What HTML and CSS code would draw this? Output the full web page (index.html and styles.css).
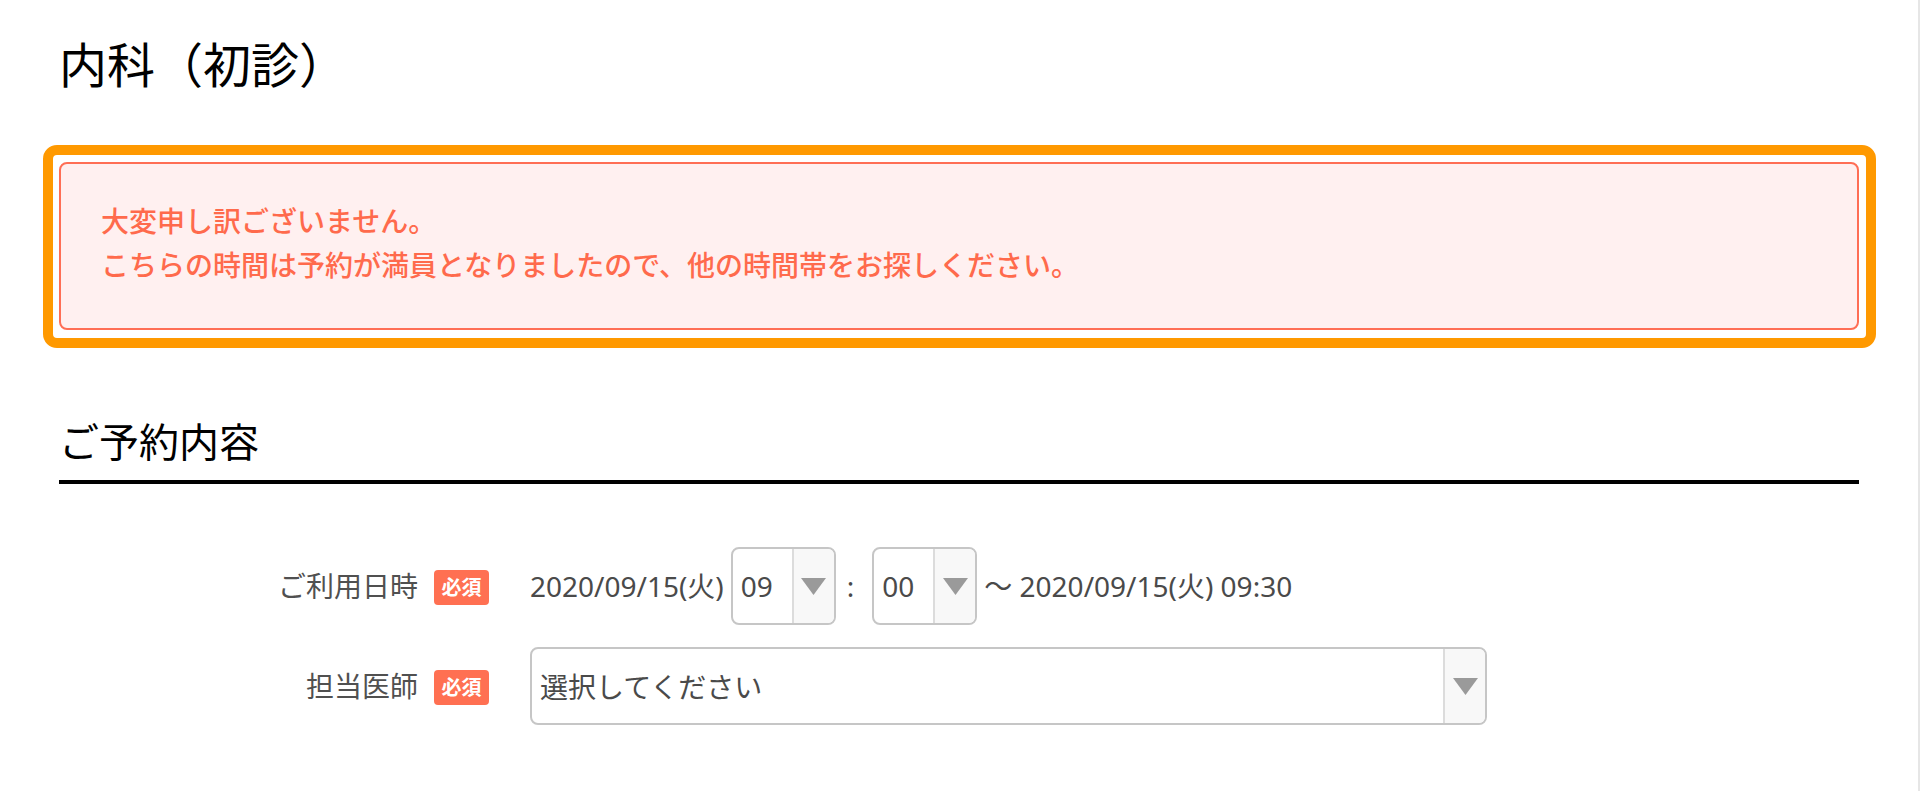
FILE: index.html
```html
<!DOCTYPE html>
<html lang="ja">
<head>
<meta charset="utf-8">
<title>内科（初診）</title>
<link rel="stylesheet" href="styles.css">
</head>
<body>
<div class="page">
  <main class="content">
    <h1 class="title">内科（初診）</h1>

    <div class="highlight">
      <div class="alert">
        <p class="alert-text">大変申し訳ございません。<br>こちらの時間は予約が満員となりましたので、他の時間帯をお探しください。</p>
      </div>
    </div>

    <section class="section">
      <h2 class="section-title">ご予約内容</h2>

      <div class="form">
        <div class="form-row">
          <div class="form-label">
            <span class="label-text">ご利用日時</span>
            <span class="badge">必須</span>
          </div>
          <div class="form-value">
            <span class="value-text date">2020/09/15(火)</span>
            <div class="select select-time">
              <span class="select-value">09</span>
              <span class="select-arrow"><svg width="25" height="17" viewBox="0 0 25 17"><polygon points="0,0 25,0 12.5,17" fill="#9a9a9a"/></svg></span>
            </div>
            <span class="value-text colon">:</span>
            <div class="select select-time">
              <span class="select-value">00</span>
              <span class="select-arrow"><svg width="25" height="17" viewBox="0 0 25 17"><polygon points="0,0 25,0 12.5,17" fill="#9a9a9a"/></svg></span>
            </div>
            <span class="value-text until">〜 2020/09/15(火) 09:30</span>
          </div>
        </div>

        <div class="form-row">
          <div class="form-label">
            <span class="label-text">担当医師</span>
            <span class="badge">必須</span>
          </div>
          <div class="form-value">
            <div class="select select-wide">
              <span class="select-value">選択してください</span>
              <span class="select-arrow"><svg width="25" height="17" viewBox="0 0 25 17"><polygon points="0,0 25,0 12.5,17" fill="#9a9a9a"/></svg></span>
            </div>
          </div>
        </div>
      </div>
    </section>
  </main>
</div>
</body>
</html>
```

FILE: styles.css
```css
* {
  box-sizing: border-box;
}

html, body {
  margin: 0;
  padding: 0;
  background: #ffffff;
}

body {
  font-family: "Noto Sans", "Noto Sans CJK JP", sans-serif;
  color: #000;
}

.page {
  width: 1920px;
  min-height: 791px;
  border-right: 2px solid #e6e6e6;
  padding-top: 29px;
}

.content {
  width: 1800px;
  margin-left: 59px;
}

.title {
  margin: 0;
  font-size: 48px;
  line-height: 72px;
  font-weight: 400;
  color: #000;
}

.highlight {
  margin: 44px -17px 0 -16px;
  border: 10px solid #ff9900;
  border-radius: 14px;
  padding: 7px 7px 8px 6px;
}

.alert {
  border: 2px solid #ff6e55;
  border-radius: 8px;
  background: #fff0f0;
  padding: 35px 40px 41px 40px;
}

.alert-text {
  margin: 0;
  font-size: 28px;
  line-height: 44px;
  font-weight: 500;
  color: #ff6a4c;
}

.section {
  margin-top: 64px;
}

.section-title {
  margin: 0;
  font-size: 40px;
  line-height: 60px;
  font-weight: 400;
  color: #000;
  padding-bottom: 8px;
  border-bottom: 4px solid #000;
}

.form {
  margin-top: 63px;
  display: flex;
  flex-direction: column;
  gap: 22px;
}

.form-row {
  display: grid;
  grid-template-columns: 430px 1fr;
  column-gap: 41px;
  align-items: center;
  height: 78px;
}

.form-label {
  display: flex;
  justify-content: flex-end;
  align-items: center;
  gap: 16px;
}

.label-text {
  font-size: 28px;
  line-height: 40px;
  color: #505050;
}

.badge {
  display: inline-block;
  height: 35px;
  padding: 0 7.5px;
  border-radius: 4px;
  background: #ff7052;
  color: #fff;
  font-size: 20px;
  line-height: 35px;
  font-weight: 700;
  margin-top: 3px;
}

.form-value {
  display: flex;
  align-items: center;
}

.value-text {
  font-size: 28px;
  line-height: 40px;
  color: #4a4a4a;
  white-space: nowrap;
}

.date {
  margin-right: 7px;
}

.colon {
  margin: 0 18px 0 11px;
}

.until {
  margin-left: 7px;
}

.select {
  display: flex;
  height: 78px;
  border: 2px solid #c6c6c6;
  border-radius: 8px;
  overflow: hidden;
  background: #fff;
}

.select-time {
  width: 105px;
}

.select-wide {
  width: 957px;
}

.select-value {
  flex: 1;
  display: flex;
  align-items: center;
  padding-left: 8px;
  font-size: 28px;
  color: #4a4a4a;
  white-space: nowrap;
}

.select-arrow {
  width: 42px;
  flex: none;
  display: flex;
  align-items: center;
  justify-content: center;
  border-left: 2px solid #dcdcdc;
  background: #f8f8f8;
}

.select-arrow svg {
  display: block;
}
```
